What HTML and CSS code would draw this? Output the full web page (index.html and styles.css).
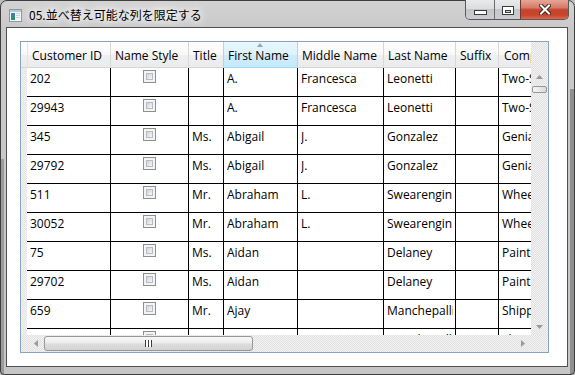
FILE: index.html
```html
<!DOCTYPE html>
<html lang="ja">
<head>
<meta charset="utf-8">
<title>05.並べ替え可能な列を限定する</title>
<link rel="stylesheet" href="styles.css">
</head>
<body>
<div class="window">
  <div class="titlebar">
    <svg class="app-icon" width="13" height="13" viewBox="0 0 13 13">
      <rect x="0.5" y="0.5" width="12" height="12" fill="#f4f6f8" stroke="#8c98a4"/>
      <rect x="1" y="1" width="11" height="2" fill="#b9c6d4"/>
      <rect x="2" y="4" width="4" height="3" fill="#3c7fb0"/>
      <rect x="2" y="7" width="4" height="4" fill="#2f8f6e"/>
      <rect x="7" y="4" width="4" height="1" fill="#c8d2dc"/>
      <rect x="7" y="6" width="4" height="1" fill="#c8d2dc"/>
      <rect x="7" y="8" width="4" height="1" fill="#c8d2dc"/>
    </svg>
    <span class="title">05.並べ替え可能な列を限定する</span>
    <div class="caption">
      <div class="cbtn min"><span class="g-min"></span></div>
      <div class="cbtn max"><span class="g-max"><span class="g-max-in"></span></span></div>
      <div class="cbtn close">
        <svg width="12" height="11" viewBox="0 0 12 11">
          <path d="M2 1.5 L10 9.5 M10 1.5 L2 9.5" stroke="#3b2622" stroke-width="4" stroke-linecap="square"/>
          <path d="M2 1.5 L10 9.5 M10 1.5 L2 9.5" stroke="#ffffff" stroke-width="2" stroke-linecap="square"/>
        </svg>
      </div>
    </div>
  </div>
  <div class="client">
    <div class="datagrid">
      <div class="dg-top">
        <div class="dg-viewport">
          <div class="dg-header">
            <div class="rh-corner"></div>
            <div class="hcell c1">Customer ID</div>
            <div class="hcell c2">Name Style</div>
            <div class="hcell c3">Title</div>
            <div class="hcell c4 sorted"><span class="sort-arrow"></span>First Name</div>
            <div class="hcell c5">Middle Name</div>
            <div class="hcell c6">Last Name</div>
            <div class="hcell c7">Suffix</div>
            <div class="hcell c8">Company Name</div>
          </div>
          <div class="dg-rows">
            <div class="row"><div class="rh"></div><div class="cell c1">202</div><div class="cell c2"><span class="cb"></span></div><div class="cell c3"></div><div class="cell c4">A.</div><div class="cell c5">Francesca</div><div class="cell c6">Leonetti</div><div class="cell c7"></div><div class="cell c8">Two-Seater Bikes</div></div>
            <div class="row"><div class="rh"></div><div class="cell c1">29943</div><div class="cell c2"><span class="cb"></span></div><div class="cell c3"></div><div class="cell c4">A.</div><div class="cell c5">Francesca</div><div class="cell c6">Leonetti</div><div class="cell c7"></div><div class="cell c8">Two-Seater Bikes</div></div>
            <div class="row"><div class="rh"></div><div class="cell c1">345</div><div class="cell c2"><span class="cb"></span></div><div class="cell c3">Ms.</div><div class="cell c4">Abigail</div><div class="cell c5">J.</div><div class="cell c6">Gonzalez</div><div class="cell c7"></div><div class="cell c8">Genial Bike Associates</div></div>
            <div class="row"><div class="rh"></div><div class="cell c1">29792</div><div class="cell c2"><span class="cb"></span></div><div class="cell c3">Ms.</div><div class="cell c4">Abigail</div><div class="cell c5">J.</div><div class="cell c6">Gonzalez</div><div class="cell c7"></div><div class="cell c8">Genial Bike Associates</div></div>
            <div class="row"><div class="rh"></div><div class="cell c1">511</div><div class="cell c2"><span class="cb"></span></div><div class="cell c3">Mr.</div><div class="cell c4">Abraham</div><div class="cell c5">L.</div><div class="cell c6">Swearengin</div><div class="cell c7"></div><div class="cell c8">Wheel Gallery</div></div>
            <div class="row"><div class="rh"></div><div class="cell c1">30052</div><div class="cell c2"><span class="cb"></span></div><div class="cell c3">Mr.</div><div class="cell c4">Abraham</div><div class="cell c5">L.</div><div class="cell c6">Swearengin</div><div class="cell c7"></div><div class="cell c8">Wheel Gallery</div></div>
            <div class="row"><div class="rh"></div><div class="cell c1">75</div><div class="cell c2"><span class="cb"></span></div><div class="cell c3">Ms.</div><div class="cell c4">Aidan</div><div class="cell c5"></div><div class="cell c6">Delaney</div><div class="cell c7"></div><div class="cell c8">Paint Supply</div></div>
            <div class="row"><div class="rh"></div><div class="cell c1">29702</div><div class="cell c2"><span class="cb"></span></div><div class="cell c3">Ms.</div><div class="cell c4">Aidan</div><div class="cell c5"></div><div class="cell c6">Delaney</div><div class="cell c7"></div><div class="cell c8">Paint Supply</div></div>
            <div class="row"><div class="rh"></div><div class="cell c1">659</div><div class="cell c2"><span class="cb"></span></div><div class="cell c3">Mr.</div><div class="cell c4">Ajay</div><div class="cell c5"></div><div class="cell c6">Manchepalli</div><div class="cell c7"></div><div class="cell c8">Shipping Specialists</div></div>
            <div class="row"><div class="rh"></div><div class="cell c1">30073</div><div class="cell c2"><span class="cb"></span></div><div class="cell c3">Mr.</div><div class="cell c4">Ajay</div><div class="cell c5"></div><div class="cell c6">Manchepalli</div><div class="cell c7"></div><div class="cell c8">Shipping Specialists</div></div>
          </div>
        </div>
        <div class="vscroll">
          <div class="vs-head"></div>
          <div class="sb-btn">
            <svg width="7" height="4" viewBox="0 0 7 4"><polygon points="3.5,0 7,4 0,4" fill="#9a9a9a"/></svg>
          </div>
          <div class="vs-track"><div class="vs-thumb"></div></div>
          <div class="sb-btn">
            <svg width="7" height="4" viewBox="0 0 7 4"><polygon points="0,0 7,0 3.5,4" fill="#9a9a9a"/></svg>
          </div>
        </div>
      </div>
      <div class="dg-bottom">
        <div class="hs-pad"></div>
        <div class="hscroll">
          <div class="sb-btn h">
            <svg width="4" height="7" viewBox="0 0 4 7"><polygon points="4,0 4,7 0,3.5" fill="#9a9a9a"/></svg>
          </div>
          <div class="hs-track">
            <div class="hs-thumb"><span class="grip"></span></div>
          </div>
          <div class="sb-btn h">
            <svg width="4" height="7" viewBox="0 0 4 7"><polygon points="0,0 4,3.5 0,7" fill="#9a9a9a"/></svg>
          </div>
        </div>
        <div class="corner"></div>
      </div>
    </div>
  </div>
</div>
</body>
</html>
```

FILE: styles.css
```css
html, body {
  margin: 0;
  padding: 0;
}
body {
  width: 575px;
  height: 375px;
  overflow: hidden;
  background: #bdbdbd;
  font-family: "Open Sans", "Noto Sans", "Noto Sans CJK JP", sans-serif;
}

.window {
  box-sizing: border-box;
  width: 575px;
  height: 375px;
  border: 1px solid #3e3e3e;
  border-radius: 7px 7px 4px 4px;
  padding: 0 6px 7px 5px;
  display: flex;
  flex-direction: column;
  background:
    linear-gradient(#9b9b9b, #9b9b9b) left 0 bottom 0 / 3px 215px no-repeat,
    linear-gradient(#8f8f8f, #8f8f8f) right 0 bottom 0 / 4px 285px no-repeat,
    linear-gradient(to bottom, #d3d3d3 0px, #c9c9c9 27px, #c6c6c6 100%);
}

/* ---------- title bar ---------- */
.titlebar {
  height: 27px;
  display: flex;
  align-items: center;
  padding-left: 3px;
  margin-right: -1px;
}
.app-icon {
  flex: none;
  margin-top: 2px;
}
.title {
  margin-left: 7px;
  font-family: "Noto Sans CJK JP", sans-serif;
  font-size: 12px;
  color: #000;
  text-shadow: 0 0 6px #fff, 0 0 10px #fff, 0 0 12px rgba(255,255,255,0.9);
  white-space: nowrap;
  margin-top: 1px;
}
.caption {
  margin-left: auto;
  align-self: flex-start;
  margin-top: -1px;
  display: flex;
  height: 19px;
  border: 1px solid #595959;
  border-top: none;
  border-radius: 0 0 5px 5px;
  overflow: hidden;
}
.cbtn {
  display: flex;
  align-items: center;
  justify-content: center;
  height: 19px;
  background: linear-gradient(to bottom, #e9eaeb 0%, #dcdddf 45%, #c3c5c8 50%, #cbcdd0 100%);
}
.cbtn.min { width: 28px; }
.cbtn.max { width: 25px; border-left: 1px solid #6e6e6e; }
.cbtn.close {
  width: 47px;
  border-left: 1px solid #6e3a30;
  background: linear-gradient(to bottom, #e6a597 0%, #d77b66 40%, #c4432b 52%, #c9452b 80%, #dc6a4e 100%);
}
.g-min {
  display: block;
  width: 11px;
  height: 3px;
  border: 1px solid #3a3a3a;
  background: #fff;
  margin-top: 6px;
  margin-left: 1px;
}
.g-max {
  display: flex;
  align-items: center;
  justify-content: center;
  box-sizing: border-box;
  width: 12px;
  height: 9px;
  border: 1px solid #3a3a3a;
  background: #fff;
  margin-top: 2px;
}
.g-max-in {
  display: block;
  box-sizing: border-box;
  width: 6px;
  height: 3px;
  border: 1px solid #3a3a3a;
  background: #d4d6d8;
  margin-top: 1px;
}

/* ---------- client ---------- */
.client {
  flex: 1;
  border: 1px solid #505050;
  background: #fff;
  padding: 13px;
}

.datagrid {
  box-sizing: border-box;
  width: 529px;
  height: 312px;
  border: 1px solid #88a4c4;
  display: flex;
  flex-direction: column;
  background: #fff;
}
.dg-top {
  display: flex;
  height: 293px;
}
.dg-viewport {
  width: 510px;
  overflow: hidden;
  font-size: 12px;
  color: #000;
}
.dg-header {
  display: flex;
  height: 26px;
  width: 800px;
}
.rh-corner {
  flex: none;
  width: 6px;
  box-sizing: border-box;
  border-bottom: 1px solid #d5d5d5;
  background: linear-gradient(to bottom, #ffffff 0%, #f8f8f9 50%, #eff0f1 51%, #eaebec 100%);
}
.hcell {
  flex: none;
  box-sizing: border-box;
  height: 26px;
  line-height: 25px;
  padding-top: 1px;
  padding-left: 4px;
  white-space: nowrap;
  overflow: hidden;
  border-right: 1px solid #d8d8d8;
  border-bottom: 1px solid #d5d5d5;
  background: linear-gradient(to bottom, #ffffff 0%, #f8f8f9 50%, #eff0f1 51%, #eaebec 100%);
  position: relative;
}
.hcell.c1 { border-left: 1px solid #e4e4e4; padding-left: 4px; }
.hcell.c8 { padding-left: 5px; }
.hcell.sorted {
  background: linear-gradient(to bottom, #e8f6fd 0%, #ddf2fc 50%, #cfedfb 51%, #c6e9fa 100%);
  border-left: 1px solid #a6d9f3;
  border-right: 1px solid #a6d9f3;
  border-bottom: 1px solid #a6d9f3;
  margin-left: -1px;
  width: 75px;
}
.sort-arrow {
  position: absolute;
  top: 1px;
  left: 50%;
  margin-left: -4px;
  width: 0;
  height: 0;
  border-left: 3.5px solid transparent;
  border-right: 3.5px solid transparent;
  border-bottom: 4px solid #97a6b8;
}

.c1 { width: 84px; }
.c2 { width: 78px; }
.c3 { width: 35px; }
.c4 { width: 74px; }
.c5 { width: 86px; }
.c6 { width: 72px; }
.c7 { width: 43px; }
.c8 { width: 160px; }

.dg-rows {
  height: 267px;
  overflow: hidden;
  width: 800px;
}
.row {
  display: flex;
  height: 29px;
}
.rh {
  flex: none;
  width: 6px;
  background: repeating-conic-gradient(#f4f4f4 0 25%, #e3e3e3 0 50%) 0 0 / 2px 2px;
}
.cell {
  flex: none;
  box-sizing: border-box;
  height: 29px;
  border-right: 1px solid #000;
  border-bottom: 1px solid #000;
  padding: 2px 2px 0 3px;
  line-height: 17px;
  white-space: nowrap;
  overflow: clip;
  overflow-clip-margin: content-box;
}
.cell.c2 { padding: 2px 0 0 0; overflow: hidden; }
.cb {
  display: block;
  box-sizing: border-box;
  width: 13px;
  height: 13px;
  margin-left: 32px;
  border: 1px solid #8e8f8f;
  padding: 2px;
  background: #f4f4f4;
}
.cb::after {
  content: "";
  display: block;
  box-sizing: border-box;
  width: 7px;
  height: 7px;
  border: 1px solid #b8bcc2;
  background: linear-gradient(135deg, #d0d4d9 0%, #e6e8ea 60%, #f6f6f6 100%);
}

/* ---------- scrollbars ---------- */
.vscroll {
  width: 17px;
  display: flex;
  flex-direction: column;
  background: repeating-conic-gradient(#f3f3f3 0 25%, #e0e0e0 0 50%) 0 0 / 2px 2px;
}
.vs-head { height: 26px; }
.sb-btn {
  flex: none;
  width: 17px;
  height: 17px;
  display: flex;
  align-items: center;
  justify-content: center;
}
.vs-track {
  flex: 1;
  padding-top: 1px;
}
.vs-thumb {
  box-sizing: border-box;
  width: 15px;
  height: 7px;
  margin-left: 1px;
  border: 1px solid #979797;
  border-radius: 2px;
  background: linear-gradient(to right, #f5f5f5 0%, #e9e9e9 50%, #d9d9d9 100%);
}

.dg-bottom {
  display: flex;
  height: 17px;
  background: repeating-conic-gradient(#f3f3f3 0 25%, #e0e0e0 0 50%) 0 0 / 2px 2px;
}
.hs-pad { width: 6px; flex: none; }
.hscroll {
  width: 504px;
  display: flex;
}
.hs-track {
  flex: 1;
  display: flex;
  align-items: center;
}
.hs-thumb {
  box-sizing: border-box;
  width: 209px;
  height: 15px;
  border: 1px solid #979797;
  border-radius: 3px;
  background: linear-gradient(to bottom, #f7f7f7 0%, #ececec 45%, #dcdcdc 55%, #d3d3d3 100%);
  display: flex;
  align-items: center;
  justify-content: center;
}
.grip {
  display: block;
  width: 7px;
  height: 7px;
  background: repeating-linear-gradient(to right, #3e3e3e 0 1px, #ffffff 1px 3px);
}
.corner {
  width: 17px;
  flex: none;
}
```
